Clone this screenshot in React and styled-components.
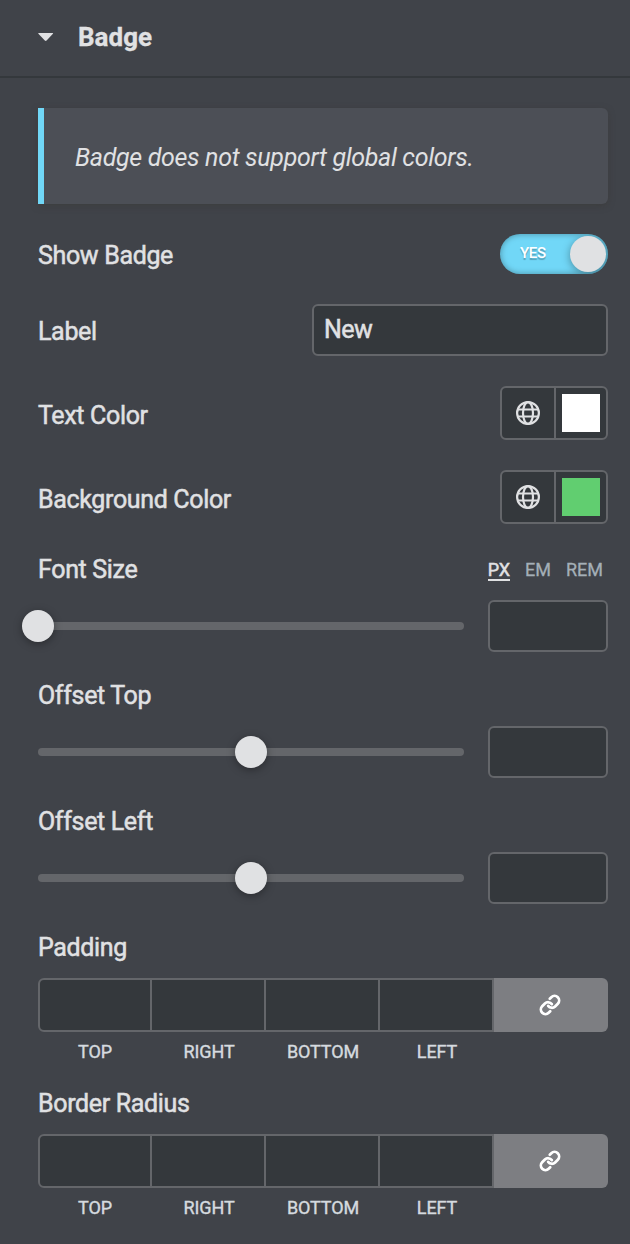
import React from 'react';
import styled, { createGlobalStyle, css } from 'styled-components';

const GlobalStyle = createGlobalStyle`
  *, *::before, *::after { box-sizing: border-box; }
  body {
    margin: 0;
    background: #404349;
    color: #e0e1e3;
    font-family: Roboto, "Liberation Sans", sans-serif;
  }
`;

const field = css`
  background: #34383c;
  border: 2px solid #64666a;
  border-radius: 6px;
`;

const Panel = styled.main`
  width: 630px;
  height: 1244px;
  overflow: hidden;
  background: #404349;
`;

const Header = styled.header`
  display: flex;
  align-items: center;
  height: 78px;
  padding: 0 0 2px 38px;
  border-bottom: 2px solid #34383c;
`;

const Caret = styled.svg`
  width: 16px;
  height: 10px;
  margin-right: 24px;
  fill: #e0e1e3;
`;

const Heading = styled.h1`
  margin: 0;
  font-size: 26px;
  line-height: 30px;
  font-weight: 700;
  -webkit-text-stroke: 0.3px currentColor;
`;

const Controls = styled.div`
  display: flex;
  flex-direction: column;
  gap: 30px;
  padding: 30px 22px 0 38px;
`;

const Notice = styled.div`
  display: flex;
  align-items: center;
  height: 96px;
  padding: 3px 0 0 31px;
  background: #4c4f56;
  border-left: 6px solid #71d7f7;
  border-radius: 0 6px 6px 0;
  box-shadow: 0 2px 6px rgba(60, 60, 60, 0.8);
  font-size: 25px;
  font-style: italic;
  font-weight: 400;
  letter-spacing: -0.32px;
  white-space: nowrap;
`;

const Row = styled.div`
  display: flex;
  align-items: center;
  justify-content: space-between;
  height: ${(p) => p.$height}px;
`;

const Label = styled.label`
  padding-top: ${(p) => p.$drop || 2}px;
  font-size: 25px;
  line-height: 26px;
  font-weight: 400;
  letter-spacing: -0.34px;
  -webkit-text-stroke: 0.5px currentColor;
  white-space: nowrap;
`;

const Switch = styled.div`
  display: flex;
  align-items: center;
  justify-content: space-between;
  width: 108px;
  height: 40px;
  padding: 0 2px 0 20px;
  border-radius: 20px;
  background: #71d7f7;
  box-shadow: inset 0 0 6px rgba(0, 0, 0, 0.35);
  overflow: hidden;
  color: #fff;
`;

const SwitchText = styled.span`
  padding-bottom: 2px;
  font-size: 15px;
  line-height: 18px;
  font-weight: 500;
  letter-spacing: -0.3px;
  text-shadow: 0 2px 1px rgba(0, 0, 0, 0.25);
`;

const Knob = styled.span`
  width: 36px;
  height: 36px;
  border-radius: 50%;
  background: #e0e1e3;
  box-shadow: 0 2px 8px rgba(0, 0, 0, 0.35);
`;

const TextInput = styled.input`
  ${field}
  width: 296px;
  height: 52px;
  padding: 0 10px 2px;
  color: #e0e1e3;
  font: 400 25px Roboto, sans-serif;
  letter-spacing: -0.6px;
  -webkit-text-stroke: 0.5px currentColor;
  outline: none;
`;

const ColorControl = styled.div`
  ${field}
  display: flex;
  width: 108px;
  height: 54px;
`;

const GlobeCell = styled.span`
  display: flex;
  align-items: center;
  justify-content: center;
  width: 54px;
  border-right: 2px solid #64666a;
`;

const Swatch = styled.span`
  width: 38px;
  height: 38px;
  margin: 6px;
  background: ${(p) => p.$color};
`;

const Group = styled.section`
  display: flex;
  flex-direction: column;
  gap: 18px;
  margin-top: ${(p) => p.$top || 0}px;
`;

const GroupHead = styled.div`
  display: flex;
  align-items: center;
  justify-content: space-between;
  height: 26px;
  padding-right: 4px;
`;

const Units = styled.div`
  display: flex;
  gap: 15px;
  padding: 4px 1px 0 0;
  font-size: 18px;
  line-height: 18px;
`;

const Unit = styled.span`
  height: 20px;
  color: ${(p) => (p.$active ? '#e0e1e3' : '#a4afb7')};
  border-bottom: 2px solid ${(p) => (p.$active ? '#e0e1e3' : 'transparent')};
  -webkit-text-stroke: ${(p) => (p.$active ? 0.5 : 0.3)}px currentColor;
`;

const SliderRow = styled.div`
  display: flex;
  align-items: center;
  gap: 24px;
  height: 52px;
`;

const Track = styled.div`
  display: flex;
  align-items: center;
  width: 426px;
  height: 8px;
  border-radius: 4px;
  background: #64666a;
`;

const Thumb = styled.span`
  flex: none;
  width: 32px;
  height: 32px;
  border-radius: 50%;
  background: #e0e1e3;
  box-shadow: 0 2px 8px rgba(0, 0, 0, 0.35);
`;

const NumberBox = styled.span`
  ${field}
  width: 120px;
  height: 52px;
`;

const Sides = styled.div`
  display: grid;
  grid-template-columns: repeat(5, 114px);
`;

const SideBox = styled.span`
  height: 54px;
  background: #34383c;
  border: 2px solid #64666a;
  border-left-width: ${(p) => (p.$first ? 2 : 0)}px;
  border-radius: ${(p) => (p.$first ? '6px 0 0 6px' : 0)};
`;

const LinkButton = styled.span`
  display: flex;
  align-items: center;
  justify-content: center;
  height: 54px;
  padding-right: 2px;
  border-radius: 0 6px 6px 0;
  background: #7d7e82;
`;

const SideName = styled.span`
  height: 28px;
  padding-top: 11px;
  text-align: center;
  font-size: 18px;
  line-height: 18px;
  color: #d5dadf;
  letter-spacing: -0.1px;
  -webkit-text-stroke: 0.4px currentColor;
`;

const Globe = () => (
  <svg width="24" height="24" viewBox="0 0 24 24" fill="none" stroke="#e0e1e3" strokeWidth="2.2">
    <circle cx="12" cy="12" r="10.9" />
    <ellipse cx="12" cy="12" rx="5" ry="10.9" />
    <path d="M1.5 8.5h21M1.5 15.5h21" />
  </svg>
);

const ChainIcon = () => (
  <svg width="22" height="22" viewBox="0 0 24 24" fill="none" stroke="#fff" strokeWidth="3" strokeLinecap="round">
    <path d="M10 13a5 5 0 0 0 7.540.540l3-3a5 5 0 0 0-7.070-7.070l-1.720 1.710" />
    <path d="M14 11a5 5 0 0 0-7.540-.540l-3 3a5 5 0 0 0 7.070 7.070l1.710-1.710" />
  </svg>
);

const ColorRow = ({ label, color }) => (
  <Row $height={54}>
    <Label $drop={5}>{label}</Label>
    <ColorControl>
      <GlobeCell><Globe /></GlobeCell>
      <Swatch $color={color} />
    </ColorControl>
  </Row>
);

const SliderGroup = ({ label, value, top, children }) => (
  <Group $top={top}>
    <GroupHead>
      <Label>{label}</Label>
      {children}
    </GroupHead>
    <SliderRow>
      <Track>
        <Thumb style={{ marginLeft: `${(value / 100) * 426 - 16}px` }} />
      </Track>
      <NumberBox />
    </SliderRow>
  </Group>
);

const SidesGroup = ({ label }) => (
  <Group>
    <GroupHead><Label>{label}</Label></GroupHead>
    <Sides>
      <SideBox $first />
      <SideBox />
      <SideBox />
      <SideBox />
      <LinkButton><ChainIcon /></LinkButton>
      {['TOP', 'RIGHT', 'BOTTOM', 'LEFT'].map((side) => (
        <SideName key={side}>{side}</SideName>
      ))}
    </Sides>
  </Group>
);

export default function App() {
  return (
    <>
      <GlobalStyle />
      <Panel>
        <Header>
          <Caret viewBox="0 0 16 10"><path d="M.8 1h13.700q1 0 .4.800L8.600 8.600q-.9.800-1.800 0L.4 1.800Q-.2 1 .8 1z" /></Caret>
          <Heading>Badge</Heading>
        </Header>
        <Controls>
          <Notice>Badge does not support global colors.</Notice>
          <Row $height={40}>
            <Label $drop={4}>Show Badge</Label>
            <Switch><SwitchText>YES</SwitchText><Knob /></Switch>
          </Row>
          <Row $height={52}>
            <Label $drop={4}>Label</Label>
            <TextInput defaultValue="New" />
          </Row>
          <ColorRow label="Text Color" color="#ffffff" />
          <ColorRow label="Background Color" color="#61ce70" />
          <SliderGroup label="Font Size" value={0} top={2}>
            <Units>
              <Unit $active>PX</Unit>
              <Unit>EM</Unit>
              <Unit>REM</Unit>
            </Units>
          </SliderGroup>
          <SliderGroup label="Offset Top" value={50} />
          <SliderGroup label="Offset Left" value={50} />
          <SidesGroup label="Padding" />
          <SidesGroup label="Border Radius" />
        </Controls>
      </Panel>
    </>
  );
}
